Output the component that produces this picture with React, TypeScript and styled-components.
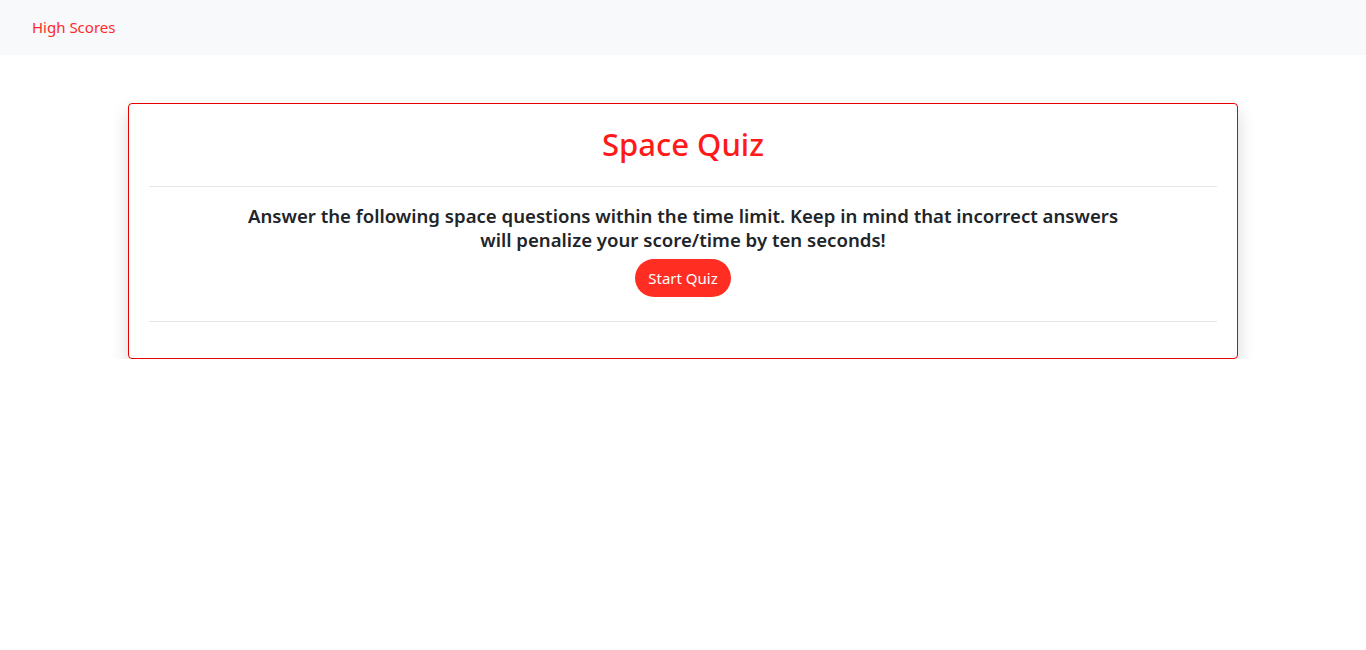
import React from 'react';
import styled, { createGlobalStyle } from 'styled-components';

const GlobalStyle = createGlobalStyle`
  body {
    margin: 0;
    background: #fff;
    font-family: "Noto Sans", "Open Sans", sans-serif;
    color: #212529;
  }
`;

const NavBar = styled.nav`
  height: 55px;
  background-color: #f8f9fa;
  display: flex;
  align-items: center;
  padding: 0 32px;
`;

const NavLink = styled.a`
  color: #ff2a2a;
  font-size: 15px;
  text-decoration: none;
  cursor: pointer;
  margin-top: -1px;
`;

const Main = styled.main`
  display: flex;
  justify-content: center;
  padding-top: 48px;
`;

const Card = styled.section`
  width: 1110px;
  box-sizing: border-box;
  border: 1px solid #e60000;
  border-radius: 4px;
  background: #fff;
  box-shadow: 0 8px 18px rgba(0, 0, 0, 0.16);
  padding: 20px 20px 36px;
  text-align: center;
`;

const Title = styled.h1`
  margin: 1px 0 23px;
  font-size: 31px;
  font-weight: 500;
  line-height: 38px;
  color: #ff1a1a;
`;

const Rule = styled.hr`
  margin: 0;
  border: 0;
  border-top: 1px solid #e5e5e5;
`;

const Body = styled.div`
  display: flex;
  flex-direction: column;
  align-items: center;
  padding: 17px 0 24px;
`;

const Lead = styled.p`
  margin: 0 0 7px;
  max-width: 885px;
  font-size: 18.6px;
  font-weight: 600;
  line-height: 24px;
  color: #212529;
`;

const StartButton = styled.button`
  height: 38px;
  padding: 0 13px;
  border: 0;
  border-radius: 19px;
  background-color: #ff2d22;
  color: #fff;
  font-family: inherit;
  font-size: 15px;
  cursor: pointer;
`;

const App: React.FC = () => (
  <>
    <GlobalStyle />
    <NavBar>
      <NavLink>High Scores</NavLink>
    </NavBar>
    <Main>
      <Card>
        <Title>Space Quiz</Title>
        <Rule />
        <Body>
          <Lead>
            Answer the following space questions within the time limit. Keep in mind that incorrect
            answers will penalize your score/time by ten seconds!
          </Lead>
          <StartButton>Start Quiz</StartButton>
        </Body>
        <Rule />
      </Card>
    </Main>
  </>
);

export default App;
